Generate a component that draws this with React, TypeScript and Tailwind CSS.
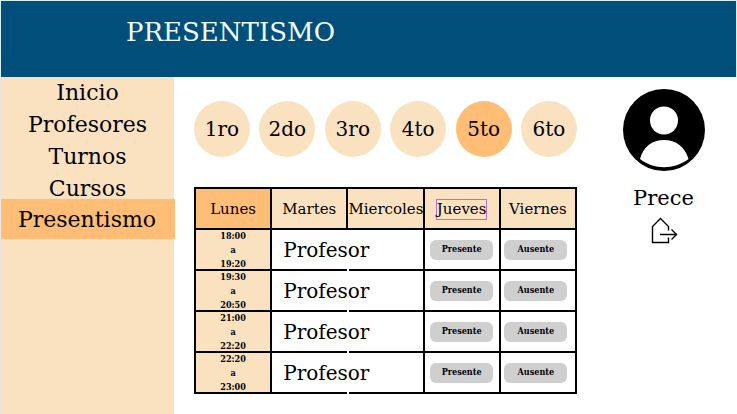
const sections = ["Inicio", "Profesores", "Turnos", "Cursos", "Presentismo"];
const years = ["1ro", "2do", "3ro", "4to", "5to", "6to"];
const shifts = [
  { from: "18:00", to: "19:20" },
  { from: "19:30", to: "20:50" },
  { from: "21:00", to: "22:20" },
  { from: "22:20", to: "23:00" },
];

const dayCell = "border-2 border-black px-0 pt-0.5 pb-0 text-center font-normal";
const statusButton =
  "mx-auto block h-5 w-[63px] rounded-md bg-[#cfcfcf] font-['DejaVu_Serif_Condensed','DejaVu_Serif',serif] text-[9px] font-bold";

function Sidebar() {
  return (
    <nav className="w-[174px] shrink-0 border-l border-[#ebe5e1] bg-[#fae2c1]">
      <ul className="flex flex-col gap-0.5 pt-px text-center text-[22px]">
        {sections.map((name) =>
          name === "Presentismo" ? (
            <li key={name} className="-mt-[7px] -mr-px">
              <a href="#presentismo" aria-current="page" className="block h-10 bg-[#ffbd76] pr-0.5 leading-[42px]">
                {name}
              </a>
            </li>
          ) : (
            <li key={name}>
              <a href={"#" + name.toLowerCase()} className="block leading-[30px]">
                {name}
              </a>
            </li>
          ),
        )}
      </ul>
    </nav>
  );
}

function Schedule() {
  return (
    <table className="w-full table-fixed border-collapse">
      <thead>
        <tr className="h-[41px] bg-[#fae2c1] text-[15px] whitespace-nowrap">
          <th scope="col" className={dayCell + " bg-[#ffbd76]"}>Lunes</th>
          <th scope="col" className={dayCell}>Martes</th>
          <th scope="col" className={dayCell}>Miercoles</th>
          <th scope="col" className={dayCell}>
            <span className="inline-block border border-[#b36fe0] leading-[19px]">Jueves</span>
          </th>
          <th scope="col" className={dayCell}>Viernes</th>
        </tr>
      </thead>
      <tbody>
        {shifts.map((shift) => (
          <tr key={shift.from} className="h-[41px]">
            <th scope="row" className="border-2 border-black bg-[#fae2c1] p-0">
              <div className="flex h-[39px] flex-col justify-center font-['DejaVu_Serif_Condensed','DejaVu_Serif',serif] text-[9px] leading-[14px] font-bold">
                <span>{shift.from}</span>
                <span>a</span>
                <span>{shift.to}</span>
              </div>
            </th>
            <td colSpan={2} className="relative border-2 border-black py-0 pr-0 pl-[11px] text-[20px] leading-6">
              Profesor
              <span className="absolute -bottom-0.5 left-1/2 h-0.5 w-0.5 bg-white" />
            </td>
            <td className="border-2 border-black p-0">
              <button type="button" className={statusButton}>Presente</button>
            </td>
            <td className="border-2 border-black py-0 pr-1 pl-0">
              <button type="button" className={statusButton}>Ausente</button>
            </td>
          </tr>
        ))}
      </tbody>
    </table>
  );
}

function Account() {
  return (
    <aside className="flex w-[147px] shrink-0 flex-col items-center pt-3">
      <svg viewBox="0 0 82 82" className="size-[82px]" aria-hidden="true">
        <circle cx="41" cy="41" r="41" fill="#000" />
        <circle cx="41" cy="31.5" r="14" fill="#fff" />
        <path d="M17 70C20 58 29 51 41 51S62 58 65.500 70C51 81 31 81 17 70Z" fill="#fff" />
      </svg>
      <p className="mt-3 text-[21px] leading-[30px]">Prece</p>
      <button type="button" aria-label="Salir" className="mt-1 flex">
        <svg viewBox="0 0 28 28" className="size-7" fill="none" stroke="#000" strokeWidth="1.4">
          <path d="M18.500 13.500V9.500L10.500 1.500L2.500 9.500V25.500H18.500V20.500" />
          <path d="M10 17.500H26.500M21.500 12.500L26.500 17.500L21.500 22.500" />
        </svg>
      </button>
    </aside>
  );
}

export default function App() {
  return (
    <div className="flex min-h-screen flex-col bg-white font-['DejaVu_Serif',serif] text-black">
      <header className="h-[77px] border-x border-t border-[#d5eff2] bg-[#004f7a] pt-3.5 pl-[125px]">
        <h1 className="text-[26px] leading-[34px] text-[#f4faf8]">PRESENTISMO</h1>
      </header>
      <div className="flex flex-1">
        <Sidebar />
        <div className="flex flex-1 gap-[13px] pl-5">
          <main className="min-w-0 flex-1 pt-6">
            <div className="mb-[30px] flex justify-between">
              {years.map((year) => (
                <button
                  key={year}
                  type="button"
                  aria-pressed={year === "5to"}
                  className="size-14 rounded-full bg-[#fae2c1] text-[20px] aria-pressed:bg-[#ffbd76]"
                >
                  {year}
                </button>
              ))}
            </div>
            <Schedule />
          </main>
          <Account />
        </div>
      </div>
    </div>
  );
}
